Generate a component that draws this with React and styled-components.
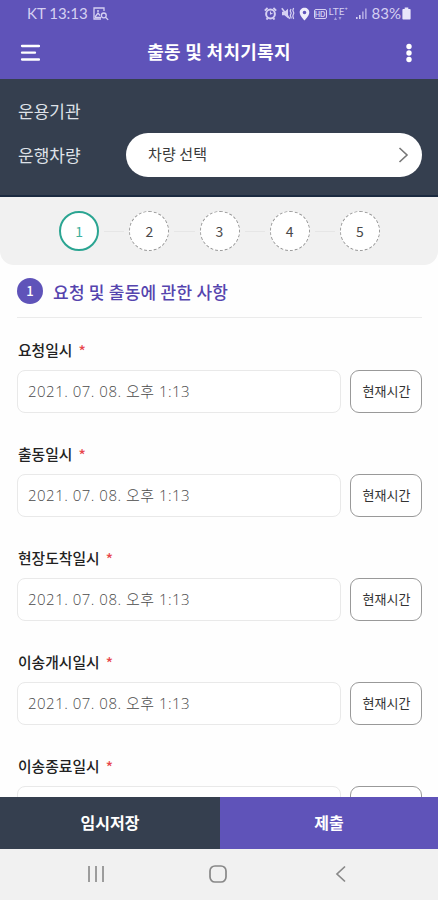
import React from 'react'
import styled, { createGlobalStyle } from 'styled-components'

const GlobalStyle = createGlobalStyle`
  * {
    box-sizing: border-box;
  }
  body {
    margin: 0;
    background: #fefefe;
    font-family: "Noto Sans CJK KR", "Noto Sans", sans-serif;
  }
  button {
    font-family: inherit;
    padding: 0;
    border: 0;
    background: none;
  }
`

const Screen = styled.div`
  width: 438px;
  height: 900px;
  display: flex;
  flex-direction: column;
  overflow: hidden;
  background: #fefefe;
`

const StatusBar = styled.div`
  height: 27px;
  flex: none;
  display: flex;
  align-items: center;
  justify-content: space-between;
  padding: 0 27px 0 27px;
  background: #5f53b9;
  color: #d5d0f2;
  font-family: "Lato", "Noto Sans", sans-serif;
  font-size: 15px;
  line-height: 27px;
`

const StatusGroup = styled.div`
  display: flex;
  align-items: center;
  gap: ${props => props.$gap}px;
  white-space: nowrap;

  svg {
    display: block;
    flex: none;
  }
`

const Clock = styled.span`
  letter-spacing: 0;
`

const Battery = styled.span`
  margin-right: -3px;
`

const AppBar = styled.header`
  height: 52px;
  flex: none;
  display: grid;
  grid-template-columns: 60px 1fr 60px;
  align-items: center;
  background: #5f53b9;
  color: #fff;

  svg {
    display: block;
  }
`

const Title = styled.h1`
  margin: 0;
  text-align: center;
  font-size: 18px;
  font-weight: 700;
  line-height: 26px;
  padding-bottom: 4px;
  letter-spacing: 0.3px;
`

const MenuButton = styled.button`
  padding-left: 20px;
`

const MoreButton = styled.button`
  padding-left: 24px;
`

const VehiclePanel = styled.section`
  height: 118px;
  flex: none;
  padding: 20px 16px 0 18px;
  background: #353f4f;
  border-bottom: 2px solid #1b2a40;
`

const PanelRow = styled.div`
  display: flex;
  align-items: center;
  height: ${props => props.$height}px;
`

const PanelLabel = styled.span`
  width: 108px;
  color: #dfe2e8;
  font-size: 17px;
  line-height: 24px;
`

const VehicleSelect = styled.button`
  flex: 1;
  height: 44px;
  display: flex;
  align-items: center;
  justify-content: space-between;
  padding: 0 13px 0 22px;
  border-radius: 22px;
  background: #fff;
  color: #3a3a3a;
  font-size: 15px;
`

const SelectText = styled.span`
  padding-bottom: 3px;
  letter-spacing: 0.1px;
`

const Steps = styled.nav`
  height: 68px;
  flex: none;
  display: flex;
  align-items: center;
  justify-content: center;
  padding-left: 1px;
  background: #f1f1f1;
  border-radius: 0 0 14px 14px;
`

const Step = styled.span`
  width: 40px;
  height: 40px;
  display: flex;
  align-items: center;
  justify-content: center;
  border: ${props => (props.$active ? '2px solid #2ba592' : '1px dashed #999')};
  border-radius: 50%;
  background: #fff;
  color: ${props => (props.$active ? '#3fb09c' : '#4a4a4a')};
  font-size: 14px;
  font-weight: 400;
  line-height: 1;
  padding-bottom: 1px;
`

const StepLine = styled.span`
  width: 20.2px;
  margin: 0 5px;
  height: 1px;
  background: #e6e6e6;
`

const Form = styled.main`
  flex: 1;
  min-height: 0;
  overflow: hidden;
  padding: 0 16px 0 17px;
`

const SectionHead = styled.div`
  height: 53px;
  display: flex;
  align-items: center;
  gap: 10px;
  border-bottom: 1px solid #ebebeb;
`

const SectionNumber = styled.span`
  width: 26px;
  height: 26px;
  display: flex;
  align-items: center;
  justify-content: center;
  border-radius: 50%;
  background: #5f53b9;
  color: #fff;
  font-size: 13px;
  font-weight: 500;
  line-height: 1;
  padding-bottom: 1px;
`

const SectionTitle = styled.h2`
  margin: 0;
  padding-top: 2px;
  color: #5544ae;
  font-size: 17px;
  font-weight: 500;
  line-height: 24px;
  letter-spacing: 0.25px;
`

const Field = styled.div`
  height: 104px;
  padding-top: 20px;
`

const FieldLabel = styled.div`
  height: 32px;
  display: flex;
  align-items: flex-start;
  padding-left: 1px;
  color: #222;
  font-size: 14.8px;
  font-weight: 500;
  line-height: 24px;
`

const Required = styled.span`
  margin-left: 6px;
  color: #e8464b;
  font-size: 15px;
  line-height: 26px;
`

const FieldRow = styled.div`
  display: flex;
  gap: 9px;
`

const DateInput = styled.div`
  flex: 1;
  height: 43px;
  padding: 0 10px;
  border: 1px solid #e9e9e9;
  border-radius: 8px;
  background: #fff;
  color: #4a4a4a;
  font-family: "Open Sans", "Noto Sans CJK KR", sans-serif;
  font-size: 15px;
  font-weight: 300;
  line-height: 40px;
  letter-spacing: 0.5px;
  white-space: nowrap;
`

const NowButton = styled.button`
  width: 72px;
  height: 43px;
  padding: 0 0 3px 1px;
  border: 1px solid #999;
  border-radius: 9px;
  background: #fff;
  color: #333;
  font-size: 13px;
`

const Actions = styled.div`
  height: 52px;
  flex: none;
  display: grid;
  grid-template-columns: 220px 1fr;
`

const ActionButton = styled.button`
  padding-bottom: 2px;
  background: ${props => (props.$primary ? '#5f53b9' : '#353f4f')};
  color: #fff;
  font-size: 16px;
  font-weight: 700;
`

const SystemNav = styled.div`
  height: 51px;
  flex: none;
  display: grid;
  grid-template-columns: 157px 122px 1fr;
  align-items: center;
  padding-bottom: 2px;
  background: #f1f1f1;

  svg {
    display: block;
  }
`

const NavKey = styled.span`
  padding-left: ${props => props.$offset}px;
`

const now = '2021. 07. 08. 오후 1:13'

const fields = [
  { label: '요청일시', value: now },
  { label: '출동일시', value: now },
  { label: '현장도착일시', value: now },
  { label: '이송개시일시', value: now },
  { label: '이송종료일시' },
]
const steps = [1, 2, 3, 4, 5]

const ImageSearchIcon = () => (
  <svg width="16" height="14" viewBox="0 0 16 14" fill="none" stroke="currentColor" strokeWidth="1.3">
    <path d="M11 4V1H1v11h7" />
    <path d="M2 10l3-4 2 2.5M4 4h2" />
    <circle cx="10.8" cy="8.4" r="2.4" />
    <path d="M12.5 10.2l2.7 2.7M2 10.5h6" />
  </svg>
)

const AlarmIcon = () => (
  <svg width="13" height="13" viewBox="0 0 13 13" fill="none" stroke="currentColor">
    <circle cx="6.5" cy="7" r="4.4" strokeWidth="2" />
    <path d="M.8 3.6L3.6 1M12.2 3.6L9.4 1M2.5 12.5l1.2-1.4M10.5 12.5l-1.2-1.4" strokeWidth="1.9" />
    <path d="M6.5 4.5V7l2-.7" strokeWidth="1.1" />
  </svg>
)

const VibrateIcon = () => (
  <svg width="14" height="13" viewBox="0 0 14 13" fill="none" stroke="currentColor">
    <path d="M1 4.8h2.5L7 1.8v9.4L3.5 8.2H1z" fill="currentColor" stroke="none" />
    <path d="M.8 1.2l8 10.6" strokeWidth="1.5" />
    <path d="M10 2l-.8 2 1 2-.9 2.5 1 3M12.6 1l-.8 2.5 1 2.5-1 3 .8 3" strokeWidth="1.2" />
  </svg>
)

const PinIcon = () => (
  <svg width="11" height="14" viewBox="0 0 11 14">
    <path
      fill="#efedfb"
      fillRule="evenodd"
      d="M5.5.8C2.8.8.7 2.9.7 5.5c0 3.3 4.8 8 4.8 8s4.8-4.7 4.8-8C10.3 2.900 8.200.8 5.500.8zm0 2.900a1.800 1.800 0 1 1 0 3.600 1.800 1.800 0 0 1 0-3.600z"
    />
  </svg>
)

const HdBadge = styled.span`
  width: 13px;
  height: 10px;
  border: 1px solid currentColor;
  border-radius: 2px;
  font-size: 7px;
  font-weight: 700;
  line-height: 8px;
  text-align: center;
`

const Lte = styled.span`
  width: 22px;
  height: 16px;
  margin-left: -2px;
  display: flex;
  flex-direction: column;
  align-items: flex-start;
  font-size: 10px;
  font-weight: 400;
  line-height: 11px;
`

const DataArrows = styled.svg`
  margin-left: 5px;
  opacity: 0.6;
`

const SignalIcon = () => (
  <svg width="13" height="13" viewBox="0 0 13 13" fill="currentColor">
    <path d="M1 10h1.600v2H1zM4 8h1.600v4H4z" />
    <path d="M7 4.500h1.700V12H7zM10 1.500h1.700V12H10z" opacity=".65" />
  </svg>
)

const BatteryIcon = () => (
  <svg width="9" height="13" viewBox="0 0 9 13" fill="#e9e6fa">
    <path d="M2.700.5h3.600v1.500h1.500c.5 0 .8.300.8.800v8.900c0 .5-.3.800-.8.800H1.200c-.5 0-.8-.3-.8-.8V2.800c0-.5.300-.8.800-.8h1.500z" />
  </svg>
)

const DateField = ({ label, value }) => (
  <Field>
    <FieldLabel>
      {label}
      <Required>*</Required>
    </FieldLabel>
    <FieldRow>
      <DateInput>{value}</DateInput>
      <NowButton>{value && '현재시간'}</NowButton>
    </FieldRow>
  </Field>
)

const App = () => {
  return (
    <Screen>
      <GlobalStyle />

      {/* Phone status bar */}
      <StatusBar>
        <StatusGroup $gap={5}>
          <Clock>KT 13:13</Clock>
          <ImageSearchIcon />
        </StatusGroup>
        <StatusGroup $gap={4}>
          <AlarmIcon />
          <VibrateIcon />
          <PinIcon />
          <HdBadge>HD</HdBadge>
          <Lte>
            LTE⁺
            <DataArrows width="9" height="4" viewBox="0 0 9 4" fill="currentColor">
              <path d="M0 3l1.500-3L3 3zM4.500 0h3L6 3z" />
            </DataArrows>
          </Lte>
          <SignalIcon />
          <Battery>83%</Battery>
          <BatteryIcon />
        </StatusGroup>
      </StatusBar>

      <AppBar>
        <MenuButton>
          <svg width="20" height="18" viewBox="0 0 20 18" stroke="#fff" strokeWidth="2.3" strokeLinecap="round">
            <path d="M2 2h17M2 8.700h13M2 15.500h17" />
          </svg>
        </MenuButton>
        <Title>출동 및 처치기록지</Title>
        <MoreButton>
          <svg width="12" height="20" viewBox="0 0 12 20" fill="#fff">
            <circle cx="7" cy="3.500" r="2.700" />
            <circle cx="7" cy="10" r="2.700" />
            <circle cx="7" cy="16.500" r="2.700" />
          </svg>
        </MoreButton>
      </AppBar>

      <VehiclePanel>
        <PanelRow $height={24}>
          <PanelLabel>운용기관</PanelLabel>
        </PanelRow>
        <PanelRow $height={64}>
          <PanelLabel>운행차량</PanelLabel>
          <VehicleSelect>
            <SelectText>차량 선택</SelectText>
            <svg width="11" height="16" viewBox="0 0 11 16" fill="none" stroke="#777" strokeWidth="1.600">
              <path d="M1.500 1l7.500 7-7.500 7" />
            </svg>
          </VehicleSelect>
        </PanelRow>
      </VehiclePanel>

      <Steps>
        {steps.map(step => (
          <React.Fragment key={step}>
            {step > 1 && <StepLine />}
            <Step $active={step === 1}>{step}</Step>
          </React.Fragment>
        ))}
      </Steps>

      <Form>
        <SectionHead>
          <SectionNumber>1</SectionNumber>
          <SectionTitle>요청 및 출동에 관한 사항</SectionTitle>
        </SectionHead>
        {fields.map(field => (
          <DateField key={field.label} label={field.label} value={field.value} />
        ))}
      </Form>

      <Actions>
        <ActionButton>임시저장</ActionButton>
        <ActionButton $primary>제출</ActionButton>
      </Actions>

      {/* Android navigation keys */}
      <SystemNav>
        <NavKey $offset={87}>
          <svg width="18" height="18" viewBox="0 0 18 18" stroke="#888" strokeWidth="1.600">
            <path d="M2 1v16M9 1v16M16 1v16" />
          </svg>
        </NavKey>
        <NavKey $offset={51}>
          <svg width="20" height="18" viewBox="0 0 20 18" fill="none" stroke="#888" strokeWidth="1.700">
            <rect x="2" y="1" width="16" height="16" rx="5" />
          </svg>
        </NavKey>
        <NavKey $offset={56}>
          <svg width="12" height="18" viewBox="0 0 12 18" fill="none" stroke="#888" strokeWidth="1.700">
            <path d="M10 1.500L2 9l8 7.500" />
          </svg>
        </NavKey>
      </SystemNav>
    </Screen>
  )
}

export default App
